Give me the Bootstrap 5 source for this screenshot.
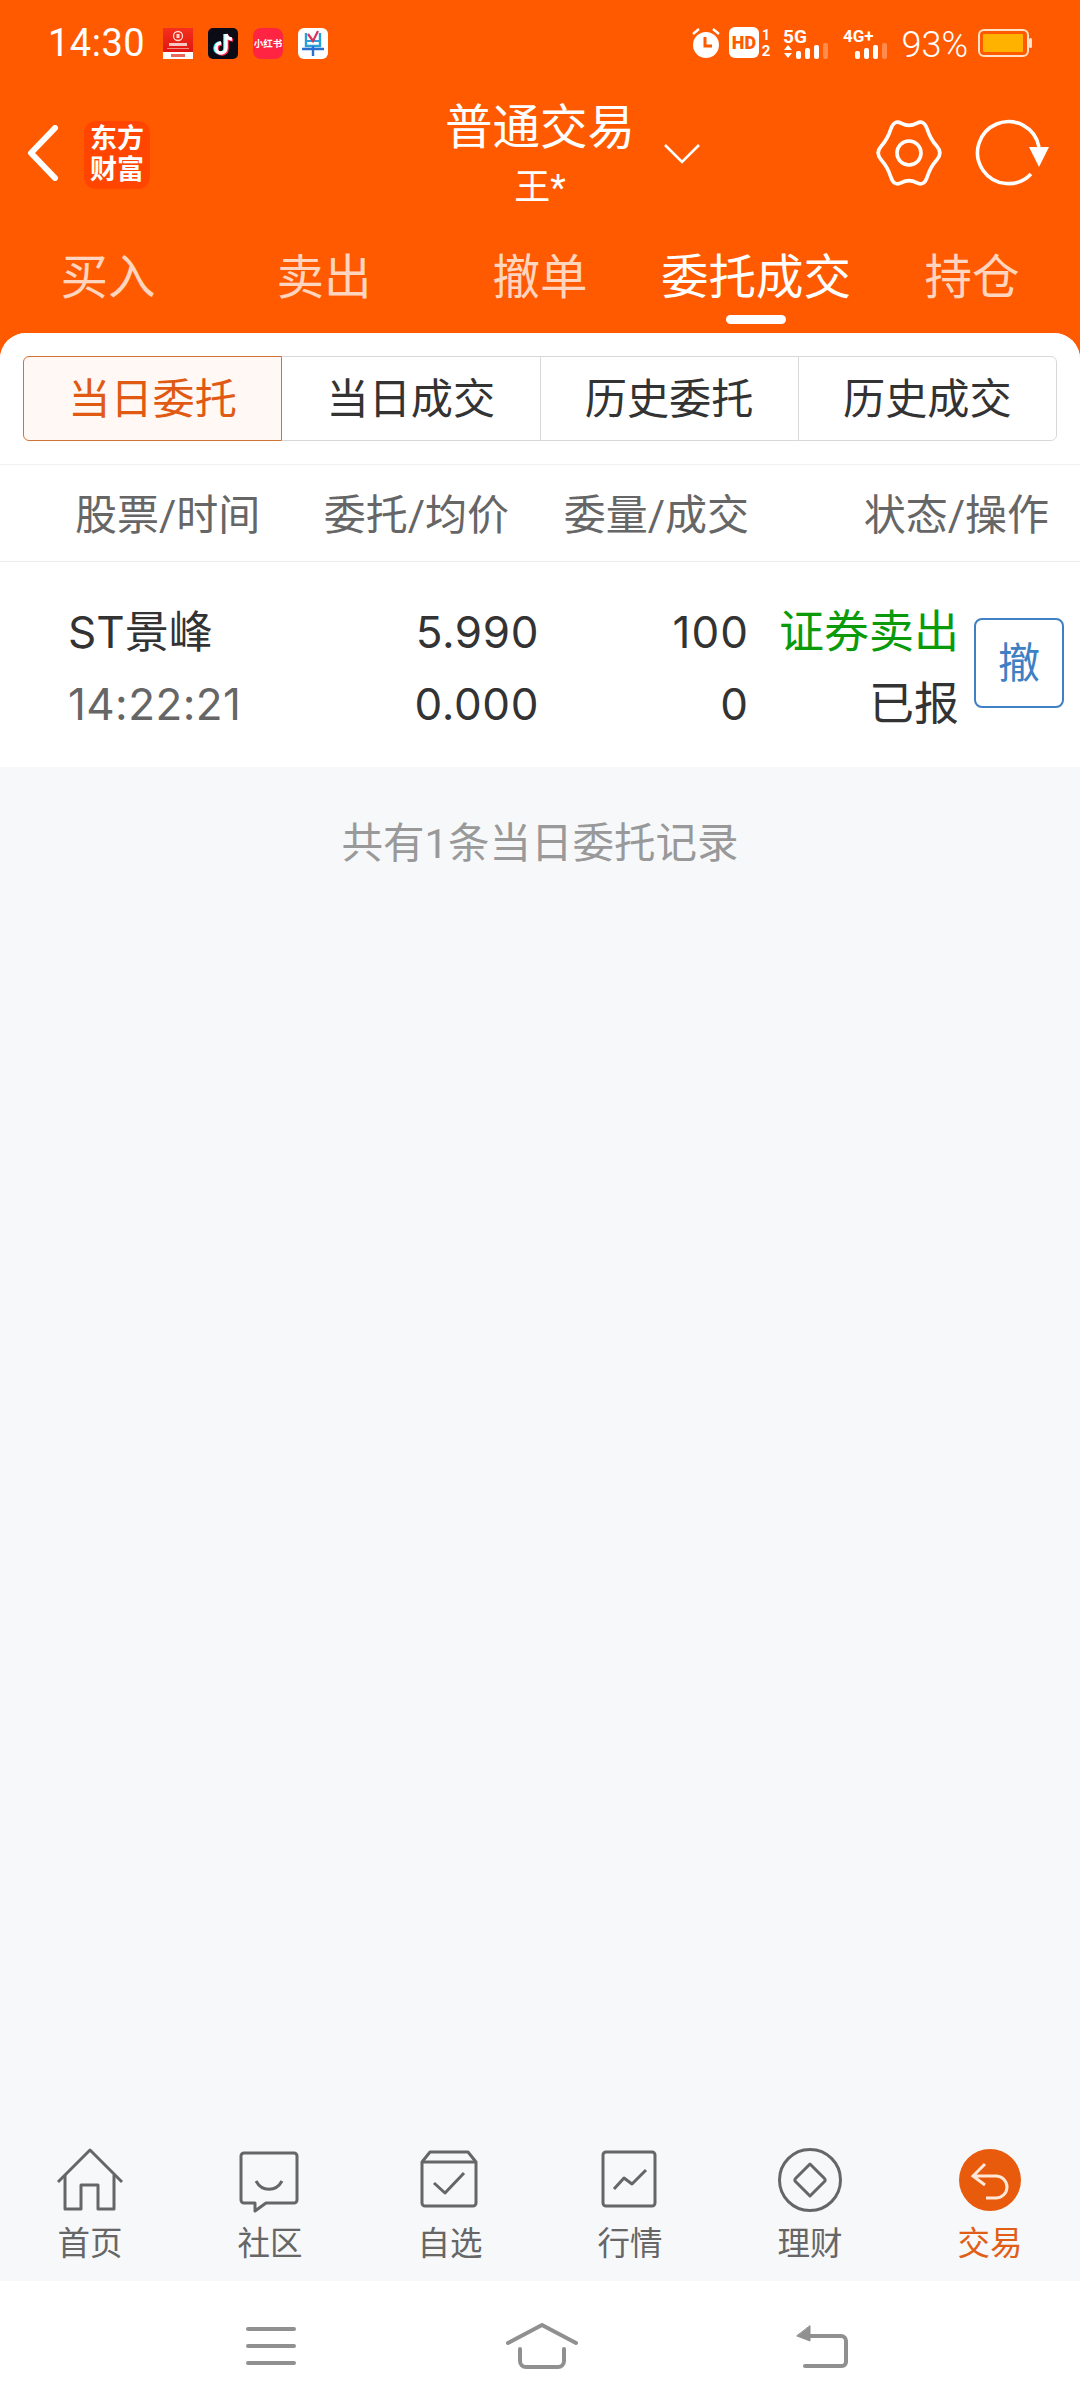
<!DOCTYPE html>
<html lang="zh-CN">
<head>
<meta charset="utf-8">
<title>普通交易</title>
<link href="https://cdn.jsdelivr.net/npm/bootstrap@5.3.0/dist/css/bootstrap.min.css" rel="stylesheet">
<style>
html,body{margin:0;height:100%;}
body{font-family:Roboto,"Noto Sans CJK SC",sans-serif;background:#ff5a00;color:#333;}
svg{display:block;flex:none;}
svg text{font-family:Roboto,"Noto Sans CJK SC",sans-serif;}
.shell{height:2408px;width:1080px;overflow:hidden;}
.statusline{height:86px;padding:0 48px;color:#fff;}
.clock{font-size:38px;line-height:1;width:115px;letter-spacing:.5px;}
.appicons{gap:15px;}
.alarm-i{margin-right:8px;}
.hd-i{margin-right:10px;}
.five-i{margin-right:12px;}
.four-i{margin-right:10px;}
.pct{font-size:36px;line-height:1;font-weight:300;margin:4px 10px 0 0;}
.topbar{height:138px;padding:0 27px 5px 27px;display:grid;grid-template-columns:1fr auto 1fr;align-items:center;}
.brandlogo{width:66px;height:68px;background:#ff4500;border-radius:12px;color:#fff;font-weight:700;font-size:27px;line-height:31px;text-align:center;padding-top:3px;margin:5px 0 0 25px;}
.titlemain{font-size:47.5px;line-height:54px;color:#fff;margin-bottom:12px;}
.titlesub{font-size:36px;line-height:42px;color:#fff;}
.titleblock{margin-top:5px;}
.caret-i{margin-left:28px;}
.refresh-i{margin-left:28px;}
.tabstrip{height:109px;}
.tabitem{flex:1 1 0;text-align:center;font-size:47.5px;line-height:54px;color:rgba(255,255,255,.76);padding:27px 0 0;text-decoration:none;}
.tabitem:hover{color:rgba(255,255,255,.76);}
.tabitem.is-on{color:#fff;}
.tabbar-mark{display:block;width:60px;height:9px;border-radius:5px;background:#fff;margin:10px auto 0;}
.sheet{background:#f7f8fa;border-radius:26px 26px 0 0;overflow:hidden;}
.whitezone{background:#fff;padding-top:23px;}
.segwrap{padding:0 23px;display:flex;}
.segwrap .btn{flex:1 1 0;font-size:42.2px;line-height:50px;height:85px;padding:2px 0 0;color:#333;background:#fff;border:1.5px solid #d8d8d8;--bs-border-radius:14px;}
.segwrap .btn.seg-on{background:#fff8f4;border-color:#cf7336;color:#e05a14;position:relative;z-index:1;}
.headrow{margin-top:23px;height:98px;padding-top:5px;border-top:1.5px solid #f1f1f1;border-bottom:1.5px solid #ececec;font-size:42px;color:#666;}
.cell-b{width:240px;text-align:right;}
.cell-c{width:300px;text-align:right;}
.cell-h1{width:305px;padding-left:75px;}
.cell-h2{width:204px;text-align:right;}
.datarow{height:205px;font-family:Inter,"Noto Sans CJK SC",sans-serif;font-size:44px;line-height:72px;}
.datarow>div{padding-top:6px;}
.data-name{width:345px;padding-left:68px;}
.data-price{width:194px;text-align:right;letter-spacing:.6px;}
.data-qty{width:210px;text-align:right;letter-spacing:1px;}
.data-state{width:210px;text-align:right;font-size:45px;}
.muted-time{color:#666;letter-spacing:.4px;}
.sellmark{color:#0a9a0a;}
.cancelbtn{width:90px;height:90px;margin:-4px 0 0 15px;padding:0;font-size:42px;color:#3f7fc4;border:2.5px solid #3f7fc4;--bs-btn-border-radius:8px;background:#fff;}
.countnote{font-size:41.5px;line-height:50px;color:#999;text-align:center;padding-top:52px;}
.bottomtabs{padding-bottom:17px;}
.tabcell{flex:1 1 0;text-align:center;font-size:32.5px;line-height:40px;color:#666;}
.tabcell svg{margin:0 auto 9px;}
.tabcell.is-on{color:#e05f18;}
.sysnav{height:127px;background:#fff;}
.navmenu{margin:2px 0 0 246px;}
.navhome{margin:2px 0 0 210px;}
.navback{margin:2px 0 0 217px;}
</style>
</head>
<body>
<div class="shell d-flex flex-column">
  <div class="statusline d-flex align-items-center justify-content-between">
    <div class="d-flex align-items-center">
      <div class="clock">14:30</div>
      <div class="d-flex appicons">
        <svg width="30" height="31" viewBox="0 0 30 31"><defs><linearGradient id="bk" x1="0" y1="0" x2="0" y2="1"><stop offset="0" stop-color="#f5301c"/><stop offset="1" stop-color="#d80f0f"/></linearGradient></defs><rect width="30" height="31" fill="url(#bk)"/><rect y="24" width="30" height="7" fill="#fff"/><circle cx="15" cy="8" r="4.500" fill="none" stroke="#ffd9cf" stroke-width="1.300"/><rect x="13.500" y="6" width="3" height="4" fill="#ffd9cf"/><rect x="6" y="15" width="18" height="3" fill="#fff" opacity=".75"/><rect x="4" y="20" width="22" height="1" fill="#fff" opacity=".5"/><rect x="8" y="26" width="14" height="3" fill="#e8695c"/></svg>
        <svg width="30" height="31" viewBox="0 0 30 31"><rect width="30" height="31" rx="5" fill="#0b0b16"/><path d="M18 6v14a5 5 0 1 1-5-5" fill="none" stroke="#25f4ee" stroke-width="3.600" transform="translate(-1 0)"/><path d="M18 6v14a5 5 0 1 1-5-5M18 6c.5 3 3 5 6 5" fill="none" stroke="#fe2c55" stroke-width="3.600" transform="translate(1 1)"/><path d="M18 6v14a5 5 0 1 1-5-5M18 6c.5 3 3 5 6 5" fill="none" stroke="#fff" stroke-width="3.400"/></svg>
        <svg width="30" height="31" viewBox="0 0 30 31"><rect width="30" height="31" rx="8" fill="#ff2442"/><text x="15" y="19" font-size="9.500" font-weight="700" fill="#fff" text-anchor="middle">小红书</text></svg>
        <svg width="30" height="31" viewBox="0 0 30 31"><rect width="30" height="31" rx="6" fill="#fff"/><path d="M8 5v13h14V5" fill="none" stroke="#2a9fd8" stroke-width="2.400"/><path d="M4 21h22M15 18v10" fill="none" stroke="#2a6fd0" stroke-width="2.400"/><path d="M8 13h14" stroke="#2a9fd8" stroke-width="2"/><path d="M10 6l5 7 5-10" fill="none" stroke="#d8345a" stroke-width="2.200"/></svg>
      </div>
    </div>
    <div class="d-flex align-items-center">
      <svg class="alarm-i" width="30" height="32" viewBox="0 0 30 32"><circle cx="15" cy="18" r="13" fill="#fff"/><path d="M14 10v9h7" fill="none" stroke="#ff5a00" stroke-width="3"/><path d="M2 7l6-5M28 7l-6-5" stroke="#fff" stroke-width="2.400"/></svg>
      <svg class="hd-i" width="44" height="36" viewBox="0 0 44 36"><rect y="2" width="30" height="31" rx="6" fill="#fff"/><text x="15" y="24" font-size="18" font-weight="900" fill="#ff5a00" text-anchor="middle">HD</text><text x="37" y="15" font-size="14" font-weight="700" fill="#fff" text-anchor="middle">1</text><text x="37" y="31" font-size="15" font-weight="700" fill="#fff" text-anchor="middle">2</text></svg>
      <svg class="five-i" width="48" height="38" viewBox="0 0 48 38"><text x="0" y="19" font-size="19" font-weight="700" fill="#fff">5G</text><path d="M5 21l4 5H1zM1 29h8l-4 5z" fill="#fff"/><g fill="#fff"><rect x="13" y="27" width="5" height="8" rx="2"/><rect x="22" y="24" width="5" height="11" rx="2"/><rect x="31" y="21" width="5" height="14" rx="2"/><rect x="40" y="19" width="5" height="16" rx="2" opacity=".3"/></g></svg>
      <svg class="four-i" width="48" height="38" viewBox="0 0 48 38"><text x="0" y="18" font-size="17" font-weight="700" fill="#fff">4G+</text><g fill="#fff"><rect x="12" y="27" width="5" height="8" rx="2"/><rect x="21" y="24" width="5" height="11" rx="2"/><rect x="30" y="21" width="5" height="14" rx="2"/><rect x="39" y="19" width="5" height="16" rx="2" opacity=".3"/></g></svg>
      <div class="pct">93%</div>
      <svg width="54" height="28" viewBox="0 0 54 28"><rect x="1" y="1" width="49" height="26" rx="5" fill="none" stroke="#ffe2c8" stroke-width="2"/><rect x="5" y="5" width="40" height="18" rx="1" fill="#ffb300"/><rect x="51" y="9" width="3" height="10" rx="1.500" fill="#ffe2c8"/></svg>
    </div>
  </div>

  <nav class="topbar">
    <div class="d-flex align-items-center">
      <svg width="32" height="56" viewBox="0 0 32 56"><path d="M28 3L4 28l24 25" fill="none" stroke="#fff" stroke-width="6" stroke-linecap="round" stroke-linejoin="round"/></svg>
      <div class="brandlogo">东方<br>财富</div>
    </div>
    <div class="text-center titleblock">
      <div class="titlemain">普通交易</div>
      <div class="titlesub">王*</div>
    </div>
    <div class="d-flex align-items-center">
      <svg class="caret-i" width="38" height="22" viewBox="0 0 38 22"><path d="M2 3l17 17L36 3" fill="none" stroke="#fff" stroke-width="2.600"/></svg>
      <svg class="ms-auto" width="72" height="72" viewBox="0 0 72 72"><path d="M63.7 42.94Q70 36 63.7 29.06Q57.39 22.11 54.22 12.16Q51.05 2.2 43.52 6.35Q36 10.5 28.48 6.35Q20.95 2.2 17.78 12.16Q14.61 22.11 8.3 29.06Q2 36 8.3 42.94Q14.61 49.89 17.78 59.84Q20.95 69.8 28.48 65.65Q36 61.5 43.52 65.65Q51.05 69.8 54.22 59.84Q57.39 49.89 63.7 42.94Z" fill="none" stroke="#fff" stroke-width="3.600" stroke-linejoin="round"/><circle cx="36" cy="36" r="12" fill="none" stroke="#fff" stroke-width="3.600"/></svg>
      <svg class="refresh-i" width="80" height="72" viewBox="0 0 80 72"><path d="M58 57A31 31 0 1 1 66 30" fill="none" stroke="#fff" stroke-width="3.600"/><path d="M56 30h20L66 50z" fill="#fff"/></svg>
    </div>
  </nav>

  <div class="nav tabstrip flex-nowrap">
    <a class="tabitem" href="#">买入</a>
    <a class="tabitem" href="#">卖出</a>
    <a class="tabitem" href="#">撤单</a>
    <a class="tabitem is-on" href="#">委托成交<span class="tabbar-mark"></span></a>
    <a class="tabitem" href="#">持仓</a>
  </div>

  <main class="sheet flex-grow-1 d-flex flex-column">
    <div class="whitezone">
      <div class="segwrap btn-group" role="group">
        <button type="button" class="btn seg-on">当日委托</button>
        <button type="button" class="btn">当日成交</button>
        <button type="button" class="btn">历史委托</button>
        <button type="button" class="btn">历史成交</button>
      </div>
      <div class="headrow d-flex align-items-center">
        <div class="cell-h1">股票/时间</div>
        <div class="cell-h2">委托/均价</div>
        <div class="cell-b">委量/成交</div>
        <div class="cell-c">状态/操作</div>
      </div>
      <div class="datarow d-flex align-items-center">
        <div class="data-name"><div>ST景峰</div><div class="muted-time">14:22:21</div></div>
        <div class="data-price"><div>5.990</div><div>0.000</div></div>
        <div class="data-qty"><div>100</div><div>0</div></div>
        <div class="data-state"><div class="sellmark">证券卖出</div><div>已报</div></div>
        <button type="button" class="btn cancelbtn">撤</button>
      </div>
    </div>
    <div class="countnote flex-grow-1">共有1条当日委托记录</div>
    <div class="bottomtabs d-flex">
      <div class="tabcell"><svg width="72" height="72" viewBox="0 0 72 72" fill="none" stroke="#666" stroke-width="3" stroke-linejoin="round"><path d="M4 39L36 7l32 32"/><path d="M11 32v34h16V42h17v24h16V32"/></svg>首页</div>
      <div class="tabcell"><svg width="72" height="72" viewBox="0 0 72 72" fill="none" stroke="#666" stroke-width="3" stroke-linejoin="round"><path d="M10 10h50a3 3 0 0 1 3 3v44a3 3 0 0 1-3 3H32L21 68V60H10a3 3 0 0 1-3-3V13a3 3 0 0 1 3-3z"/><path d="M22 38c6 11 20 11 26 0"/></svg>社区</div>
      <div class="tabcell"><svg width="72" height="72" viewBox="0 0 72 72" fill="none" stroke="#666" stroke-width="3" stroke-linejoin="round"><path d="M16 9h38l8 10v41a3 3 0 0 1-3 3H11a3 3 0 0 1-3-3V19z"/><path d="M8 19h54"/><path d="M20 40l11 10 19-20"/></svg>自选</div>
      <div class="tabcell"><svg width="72" height="72" viewBox="0 0 72 72" fill="none" stroke="#666" stroke-width="3" stroke-linejoin="round"><rect x="9" y="9" width="52" height="54" rx="3"/><path d="M20 46l10-11 8 6 14-14"/></svg>行情</div>
      <div class="tabcell"><svg width="72" height="72" viewBox="0 0 72 72" fill="none" stroke="#666" stroke-width="3" stroke-linejoin="round"><circle cx="36" cy="37" r="30.500"/><path d="M36 21l14.500 14.500a2 2 0 0 1 0 3L36 53 21.500 38.500a2 2 0 0 1 0-3z"/></svg>理财</div>
      <div class="tabcell is-on"><svg width="72" height="72" viewBox="0 0 72 72" fill="none"><circle cx="36" cy="37" r="31" fill="#e85a0c"/><path d="M31 21L19 33l12 9M19 33h23a11 11 0 0 1 0 22H32" stroke="#ffe8d8" stroke-width="3"/></svg>交易</div>
    </div>
    <div class="sysnav d-flex align-items-center">
      <svg class="navmenu" width="50" height="40" viewBox="0 0 50 40" fill="none" stroke="#909090" stroke-width="4" stroke-linecap="round"><path d="M2 3h46M2 20h46M2 37h46"/></svg>
      <svg class="navhome" width="72" height="46" viewBox="0 0 72 46" fill="none" stroke="#909090" stroke-width="4" stroke-linecap="round" stroke-linejoin="round"><path d="M2 20L36 2l34 18"/><path d="M14 26v12a6 6 0 0 0 6 6h32a6 6 0 0 0 6-6V26"/></svg>
      <svg class="navback" width="54" height="44" viewBox="0 0 54 44" fill="none" stroke="#909090" stroke-width="4" stroke-linecap="round" stroke-linejoin="round"><path d="M14 12h32a5 5 0 0 1 5 5v21a4 4 0 0 1-4 4H10"/><path d="M15 2v15L2 12z" fill="#909090" stroke-width="1"/></svg>
    </div>
  </main>
</div>
<script src="https://cdn.jsdelivr.net/npm/bootstrap@5.3.0/dist/js/bootstrap.bundle.min.js"></script>
</body>
</html>
